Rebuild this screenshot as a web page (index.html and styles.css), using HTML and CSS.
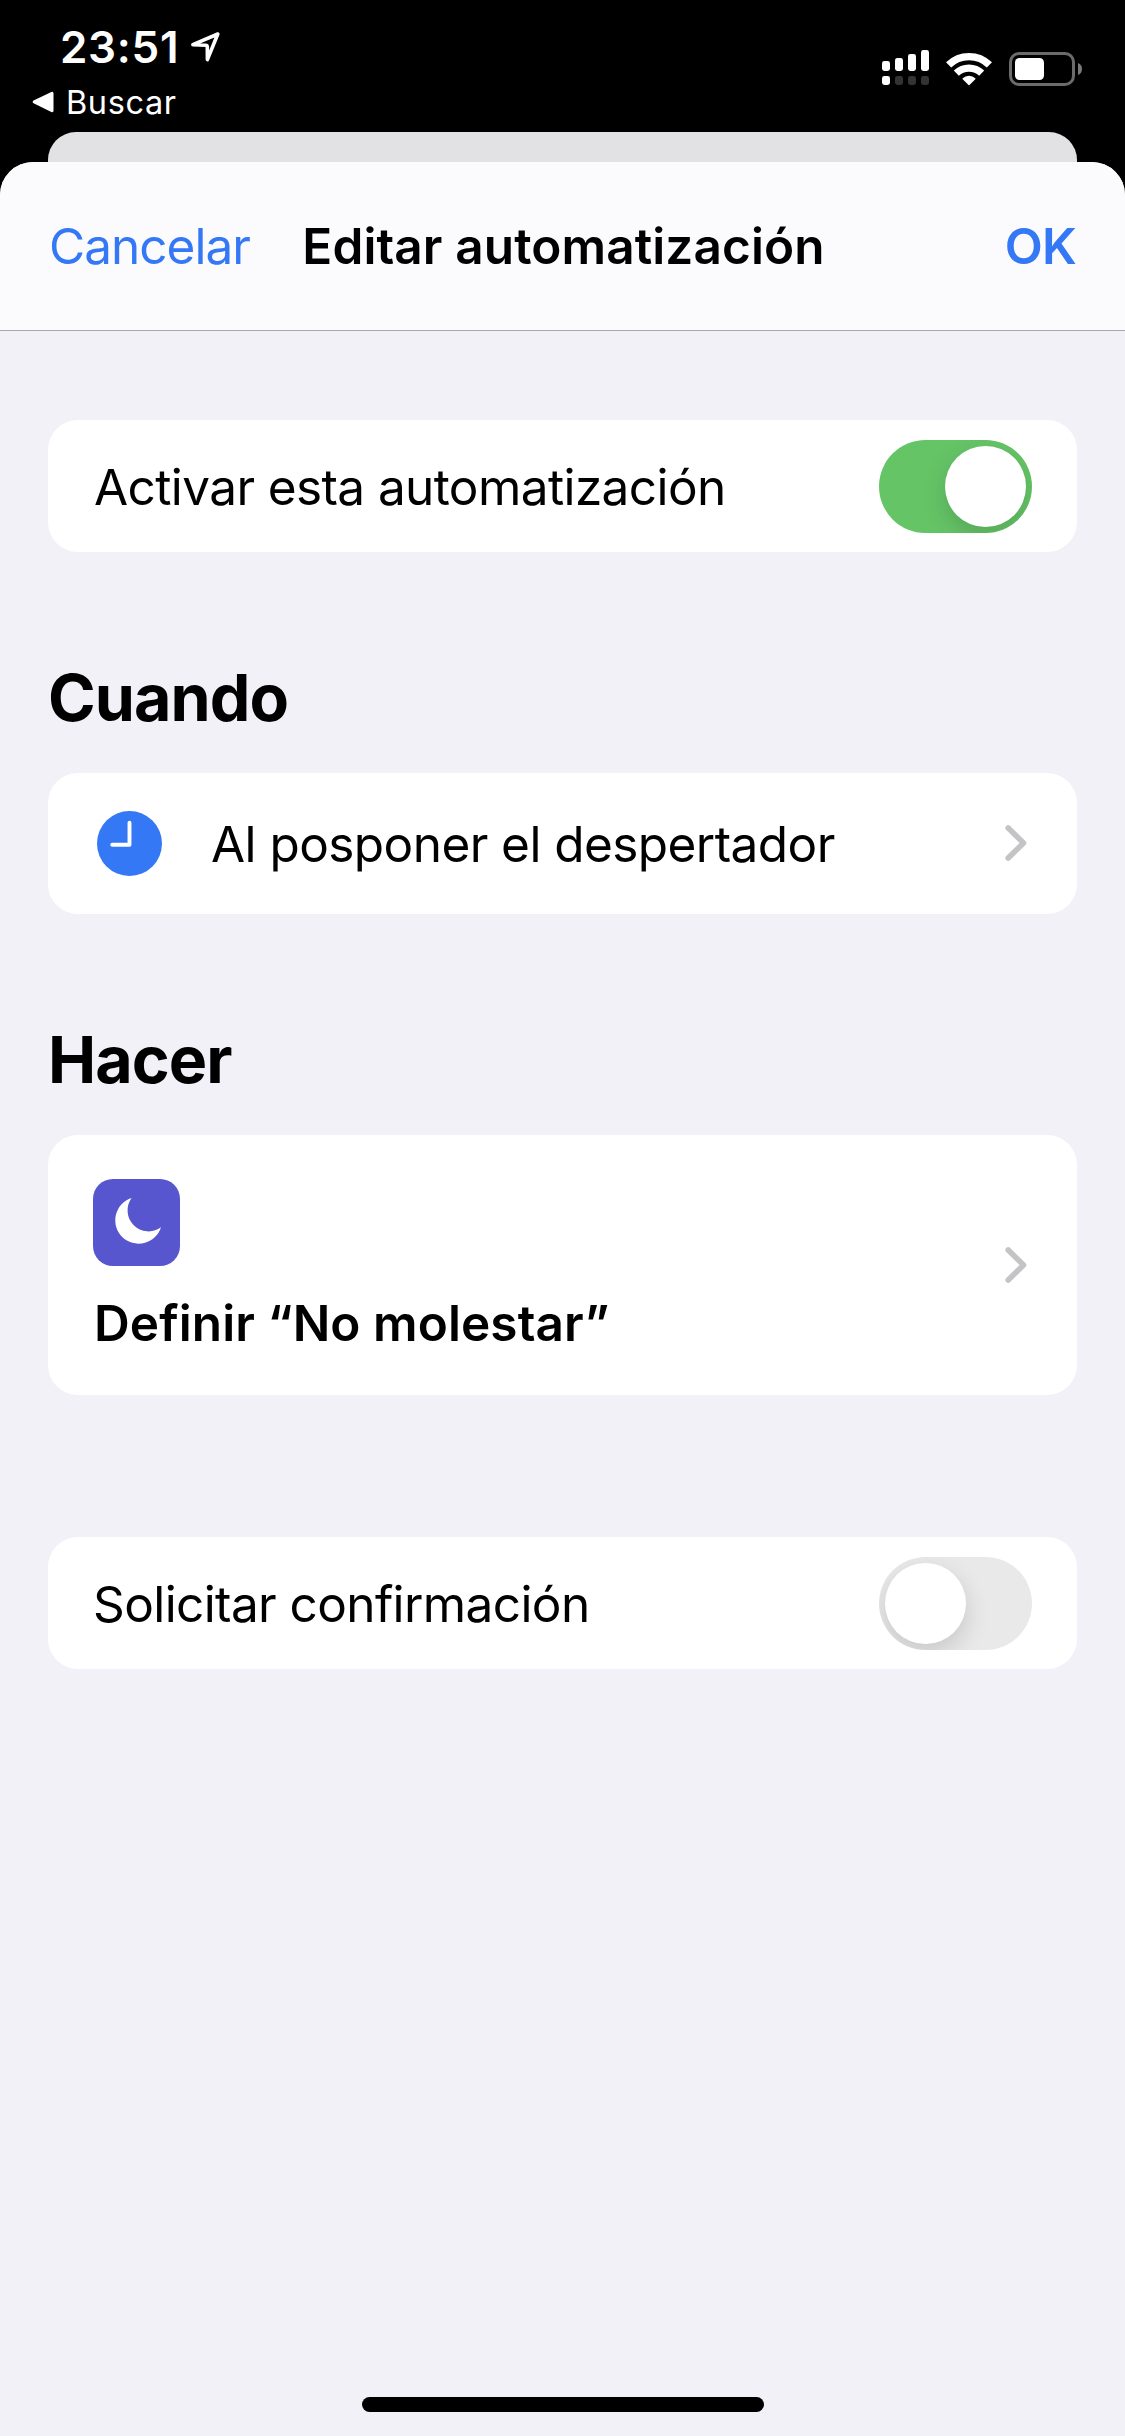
FILE: index.html
```html
<!DOCTYPE html>
<html lang="es">
<head>
<meta charset="utf-8">
<title>Editar automatización</title>
<link rel="stylesheet" href="styles.css">
</head>
<body>
<div class="screen">
  <header class="status">
    <div class="status-left">
      <div class="clock-row">
        <span class="time">23:51</span>
        <svg class="location" width="34" height="34" viewBox="0 0 34 34" fill="none" stroke="#fff" stroke-width="3.6" stroke-linejoin="round"><path d="M4.900 14.700 29.800 4 19.400 29.600 19.300 16.400Q19.200 15.300 18 15.200Z"/></svg>
      </div>
      <div class="back-row">
        <svg class="back-icon" width="22" height="22" viewBox="0 0 22 22"><path d="M2.200 10.900 20 2.300V19.700Z" fill="#fff" stroke="#fff" stroke-width="3" stroke-linejoin="round"/></svg>
        <span class="back-label">Buscar</span>
      </div>
    </div>
    <div class="status-right">
      <svg width="47" height="35" viewBox="0 0 47 35" fill="#fff">
        <rect x="0" y="11" width="8" height="10" rx="2.4"/>
        <rect x="13" y="8" width="8" height="13" rx="2.4"/>
        <rect x="26" y="4" width="8" height="17" rx="2.4"/>
        <rect x="39" y="0" width="8" height="21" rx="2.4"/>
        <rect x="0" y="26" width="8" height="9" rx="2.4"/>
        <g fill="#333"><rect x="13" y="26" width="8" height="9" rx="2.4"/><rect x="26" y="26" width="8" height="9" rx="2.4"/><rect x="39" y="26" width="8" height="9" rx="2.4"/></g>
      </svg>
      <svg class="wifi" width="46" height="34" viewBox="0 0 46 34" fill="none" stroke="#fff">
        <path d="M2.600 12.900A29.200 29.200 0 0 1 43.400 12.900" stroke-width="7.4"/>
        <path d="M10.300 21.200A18.200 18.200 0 0 1 35.700 21.200" stroke-width="7.2"/>
        <path d="M23 32.400 17.200 26.800A8.200 8.200 0 0 1 28.800 26.800Z" fill="#fff" stroke-width="1.4" stroke-linejoin="round"/>
      </svg>
      <svg class="battery" width="74" height="34" viewBox="0 0 74 34">
        <rect x="1.5" y="1.5" width="63" height="31" rx="8.5" fill="none" stroke="#6b6b6b" stroke-width="3"/>
        <rect x="6" y="6" width="29" height="22" rx="4.5" fill="#fff"/>
        <path d="M69 11Q73 12.500 73 17T69 23Z" fill="#7a7a7a"/>
      </svg>
    </div>
  </header>

  <div class="sheet-behind"></div>

  <main class="sheet">
    <nav class="navbar">
      <span class="nav-cancel">Cancelar</span>
      <h1 class="nav-title">Editar automatización</h1>
      <span class="nav-ok">OK</span>
    </nav>

    <div class="content">
      <section class="card toggle-card">
        <span class="label label-enable">Activar esta automatización</span>
        <span class="switch switch-on"><span class="knob"></span></span>
      </section>

      <h2 class="heading">Cuando</h2>
      <section class="card trigger-card">
        <svg class="trigger-icon" width="65" height="65" viewBox="0 0 65 65"><circle cx="32.500" cy="32.500" r="32.500" fill="#3478f6"/><path d="M32.500 11.700V33.800H15.200" fill="none" stroke="#fff" stroke-width="3.900" stroke-linecap="round" stroke-linejoin="round"/></svg>
        <span class="label label-trigger">Al posponer el despertador</span>
        <svg class="chevron" width="22" height="38" viewBox="0 0 22 38"><path d="M3.200 3.900 18.500 19 3.200 34.100"/></svg>
      </section>

      <h2 class="heading">Hacer</h2>
      <section class="card action-card">
        <div class="action">
          <svg class="action-icon" width="87" height="87" viewBox="0 0 87 87"><path d="M38.600 19A23.400 23.400 0 1 0 68 48.300 21 21 0 0 1 38.600 19Z" fill="#fff"/></svg>
          <span class="label label-action">Definir “No molestar”</span>
        </div>
        <svg class="chevron" width="22" height="38" viewBox="0 0 22 38"><path d="M3.200 3.900 18.500 19 3.200 34.100"/></svg>
      </section>

      <section class="card toggle-card confirm-card">
        <span class="label label-confirm">Solicitar confirmación</span>
        <span class="switch"><span class="knob"></span></span>
      </section>
    </div>

    <div class="home-indicator"></div>
  </main>
</div>
</body>
</html>
```

FILE: styles.css
```css
* { box-sizing: border-box; }

body {
  margin: 0;
  background: #000;
  color: #000;
  font-family: "Inter", "Liberation Sans", sans-serif;
}

svg { display: block; flex: none; }

.screen {
  display: flex;
  flex-direction: column;
  width: 1125px;
  height: 2436px;
  overflow: hidden;
  background: #000;
}

/* Status bar */
.status {
  display: flex;
  justify-content: space-between;
  height: 132px;
  padding: 21px 43px 0 32px;
  color: #fff;
}

.clock-row {
  display: flex;
  height: 52px;
  padding-left: 28px;
}

.time {
  font-size: 44px;
  font-weight: 600;
  line-height: 52px;
  letter-spacing: 0.7px;
}

.location { margin: 9px 0 0 9px; }

.back-row {
  display: flex;
  margin-top: 10px;
}

.back-icon { margin-top: 8px; }

.back-label {
  margin-left: 12px;
  font-size: 32.5px;
  line-height: 39px;
  letter-spacing: 0.6px;
}

.status-right {
  display: flex;
  align-items: flex-start;
  padding-top: 29px;
}

.wifi { margin: 2px 0 0 17px; }
.battery { margin: 2px -1px 0 17px; }

/* Sheets */
.sheet-behind {
  height: 30px;
  margin: 0 48px;
  border-radius: 28px 28px 0 0;
  background: #e2e2e4;
}

.sheet {
  display: flex;
  flex: 1;
  flex-direction: column;
  overflow: hidden;
  border-radius: 33px 33px 0 0;
  background: #f2f1f7;
}

.navbar {
  display: grid;
  grid-template-columns: 1fr auto 1fr;
  height: 169px;
  padding: 54px 49px 0 48px;
  border-bottom: 1px solid #a9a9ae;
  background: #fbfbfd;
  font-size: 49.5px;
  line-height: 60px;
}

.nav-cancel {
  padding-left: 1px;
  color: #3478f6;
  letter-spacing: -0.97px;
}

.nav-title {
  margin: 0;
  padding-left: 3px;
  font-size: inherit;
  font-weight: 600;
  letter-spacing: 0.11px;
}

.nav-ok {
  color: #3478f6;
  font-weight: 600;
  letter-spacing: -0.74px;
  text-align: right;
}

.content {
  flex: 1;
  padding: 89px 48px 0;
}

.heading {
  margin: 107px 0 36px;
  font-size: 64.5px;
  font-weight: 700;
  line-height: 78px;
  letter-spacing: -0.95px;
}

.card {
  display: flex;
  align-items: center;
  justify-content: space-between;
  border-radius: 30px;
  background: #fff;
}

.label {
  font-size: 49.5px;
  line-height: 60px;
}

.toggle-card {
  height: 132px;
  padding: 0 45px 0 46px;
}

.toggle-card .label { padding-top: 2px; }
.label-enable { letter-spacing: -0.6px; }

.confirm-card {
  margin-top: 142px;
  padding-left: 45px;
}

.label-confirm { letter-spacing: -0.6px; }

.switch {
  display: flex;
  flex: none;
  width: 153px;
  height: 93px;
  padding: 6px;
  overflow: hidden;
  border-radius: 47px;
  background: #e9e9ea;
}

.switch-on {
  justify-content: flex-end;
  background: #65c466;
}

.knob {
  width: 81px;
  height: 81px;
  border-radius: 50%;
  background: #fff;
  box-shadow: 0 9px 24px rgba(0, 0, 0, 0.15);
}

.trigger-card {
  height: 141px;
  padding: 0 50px 0 49px;
}

.label-trigger {
  flex: 1;
  padding: 1px 0 0 49px;
  letter-spacing: -0.56px;
}

.trigger-icon { margin-bottom: 1px; }

.chevron {
  margin-bottom: 1px;
  fill: none;
  stroke: #c4c4c6;
  stroke-width: 5.6px;
  stroke-linecap: round;
  stroke-linejoin: round;
}

.action-card {
  height: 260px;
  padding: 2px 50px 0 45px;
}

.action-card .chevron { margin-bottom: 2px; }

.action {
  display: flex;
  flex-direction: column;
  gap: 27px;
}

.action-icon {
  border-radius: 20px;
  background: #5856ce;
}

.label-action {
  padding-left: 1px;
  font-weight: 600;
  letter-spacing: 0.08px;
}

.home-indicator {
  flex: none;
  width: 402px;
  height: 15px;
  margin: 0 auto 24px;
  border-radius: 8px;
  background: #000;
}
```
